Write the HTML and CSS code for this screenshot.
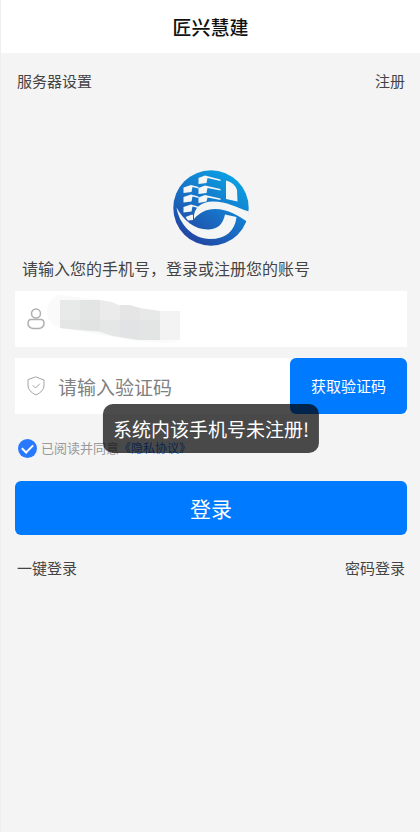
FILE: index.html
```html
<!DOCTYPE html>
<html lang="zh-CN">
<head>
<meta charset="utf-8">
<meta name="viewport" content="width=device-width, initial-scale=1">
<title>匠兴慧建</title>
<link rel="stylesheet" href="styles.css">
</head>
<body>
<header class="topbar"><h1>匠兴慧建</h1></header>
<main class="page">
  <nav class="links">
    <a href="#server">服务器设置</a>
    <a href="#register">注册</a>
  </nav>
  <svg class="logo" viewBox="0 0 76 76" role="img" aria-label="匠兴慧建">
    <defs>
      <linearGradient id="disc" x1="0.85" y1="0.15" x2="0.3" y2="0.95">
        <stop offset="0" stop-color="#0a9de1"/>
        <stop offset="0.5" stop-color="#1774c8"/>
        <stop offset="1" stop-color="#2148a4"/>
      </linearGradient>
    </defs>
    <circle cx="38" cy="38" r="37.700" fill="url(#disc)"/>
    <g fill="#f4f5f5">
      <path d="M53 10.500Q62 13 64 20l.5 11.500L53 29z"/>
      <path d="M25.500 8 32 5.500 47.500 9.500v1.500L34.500 8 33.500 13l-8 1z"/>
      <path d="M10.500 17.500 18 15l7.500 2v1.500L19.500 17l-1 5-8 1z"/>
      <path d="M25.500 18 32 15.500 47.500 19v1.500L34.500 18l-1 5-8 1z"/>
      <path d="M10.500 27 18 24.500l7.500 2V28L19.500 26.500l-1 5-8 1z"/>
      <path d="M25.500 27.500 32 25 47.500 28.500V30L34.500 27.500l-1 4-8 1.500z"/>
      <path d="M10.500 37 18 34.500l7 2V38l-5.500-1.500-1 5-8 1z"/>
      <path d="M12.500 47 19 44.500l1 .5v5l-5 .5z"/>
      <path d="M3.500 37.500C6 54 20 69 37 69c16 0 25-8 26.500-22L52 44.500C50 54 45 59 36 59.500 22 60 11 51 3.500 37.500z"/>
      <path d="M21 49C20 38 28 31.500 40 31.500c14 0 23 6 36 10L74 51.500C66 46 55 39 42 39 33 39 26 43 21 49z"/>
    </g>
  </svg>
  <form class="login">
    <label class="hint" for="phone">请输入您的手机号，登录或注册您的账号</label>
    <div class="field">
      <svg class="icon" viewBox="0 0 20 22" aria-hidden="true">
        <circle cx="10" cy="5.500" r="4.500"/>
        <path d="M5 11.500h10q3 0 3 4t-5 5H7q-5-1-5-5t3-4z"/>
      </svg>
      <div class="entry">
        <input id="phone" type="tel">
        <svg class="mask" viewBox="0 0 140 48" aria-hidden="true">
          <path fill="#fafafa" d="M0 16Q2 0 15 0l39 5 60 15v25l20 1q-20 4-50-1L13 33Q0 29 0 16z"/>
          <path fill="#e8e9e9" d="M13 5h40v31l-20-1-20-2z"/>
          <path fill="#e3e4e4" d="M33 5h20v31l-20-1z"/>
          <path fill="#ebebeb" d="M53 5l12 2 8 4v31l-8-1-12-4z"/>
          <path fill="#e5e5e6" d="M73 10l10 0 10 3v32l-20-3z"/>
          <path fill="#e7e9e9" d="M93 13l20 3v29H93z"/>
          <path fill="#f3f3f3" d="M113 16h20v29h-20z"/>
          <path fill="#dfe1e1" fill-opacity="0.5" d="M13 25h100v20H90l-17-3-20-5-40-4z"/>
        </svg>
      </div>
    </div>
    <div class="field">
      <svg class="icon shield" viewBox="0 0 20 22" aria-hidden="true">
        <path d="M10 2l8 3v6q0 5-8 9-8-4-8-9V5z"/>
        <path d="M7 10.500l2.500 2.500 4-4"/>
      </svg>
      <div class="entry"><input type="text" placeholder="请输入验证码" aria-label="验证码"></div>
      <button class="code" type="button">获取验证码</button>
      <div class="toast" role="status">系统内该手机号未注册!</div>
    </div>
    <div class="agree">
      <input id="agree" type="checkbox" checked>
      <label for="agree">已阅读并同意</label>
      <a href="#privacy">《隐私协议》</a>
    </div>
    <button class="submit" type="submit">登录</button>
  </form>
  <nav class="links">
    <a href="#quick">一键登录</a>
    <a href="#password">密码登录</a>
  </nav>
</main>
</body>
</html>
```
FILE: styles.css
```css
* {
  box-sizing: border-box;
}

body {
  margin: 0;
  min-height: 100vh;
  border-left: 1px solid #eeeeee;
  background: #f4f4f4;
  color: #444444;
  font-family: "Noto Sans CJK SC", sans-serif;
  font-size: 15px;
  line-height: 24px;
}

a {
  color: inherit;
  text-decoration: none;
}

input,
button {
  margin: 0;
  border: 0;
  font: inherit;
}

.topbar {
  padding: 13px;
  background: #ffffff;
  text-align: center;
}

.topbar h1 {
  margin: 0;
  color: #111111;
  font-size: 19px;
  font-weight: 500;
  line-height: 27px;
}

.page {
  padding: 16px 13px 16px 14px;
}

.links {
  display: flex;
  justify-content: space-between;
  padding: 0 2px;
}

.logo {
  display: block;
  width: 76px;
  height: 76px;
  margin: 77px auto 10px;
}

.hint {
  display: block;
  padding-left: 7px;
  margin-bottom: 11px;
  font-size: 16px;
}

.field {
  position: relative;
  display: flex;
  align-items: center;
  height: 56px;
  margin-bottom: 11px;
  background: #ffffff;
}

.icon {
  flex: none;
  width: 20px;
  height: 22px;
  margin: 0 12px 0 11px;
  fill: none;
  stroke: #b0b0b0;
  stroke-width: 1.5;
  stroke-linecap: round;
  stroke-linejoin: round;
}

.shield {
  stroke: #a4a4a4;
  stroke-width: 1;
}

.entry {
  position: relative;
  flex: 1;
  min-width: 0;
  height: 100%;
}

.entry input {
  width: 100%;
  height: 100%;
  padding: 0;
  background: transparent;
  color: #444444;
  font-size: 19px;
  outline: none;
}

.entry input::placeholder {
  color: #808080;
  opacity: 1;
}

.mask {
  position: absolute;
  top: 4px;
  left: -11px;
  width: 140px;
  height: 48px;
}

.code {
  align-self: stretch;
  width: 117px;
  border-radius: 6px;
  background: #007aff;
  color: #ffffff;
}

.toast {
  position: absolute;
  top: 46px;
  left: 50%;
  padding: 12px 10px;
  border-radius: 10px;
  background: rgba(0, 0, 0, 0.7);
  color: #ffffff;
  font-size: 19px;
  line-height: 25px;
  white-space: nowrap;
  transform: translateX(-50%);
}

.agree {
  display: flex;
  align-items: center;
  padding-left: 3px;
  margin-bottom: 21px;
  color: #999999;
  font-size: 13px;
}

.agree input {
  display: grid;
  place-items: center;
  width: 19px;
  height: 19px;
  margin-right: 4px;
  border-radius: 50%;
  background: #2979ff;
  appearance: none;
}

.agree input:checked::before {
  width: 9px;
  height: 5px;
  border: solid #ffffff;
  border-width: 0 0 2px 2px;
  content: "";
  transform: translateY(-1px) rotate(-45deg);
}

.agree a {
  color: #2979ff;
  font-size: 12px;
}

.login > .field + .agree {
  margin-top: 22px;
}

.submit {
  display: block;
  width: 100%;
  height: 54px;
  margin-bottom: 21px;
  border-radius: 6px;
  background: #007aff;
  color: #ffffff;
  font-size: 21px;
}
```
